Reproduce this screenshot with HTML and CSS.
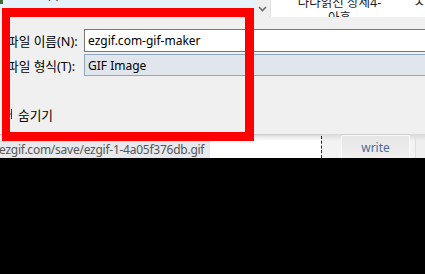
FILE: index.html
```html
<!DOCTYPE html>
<html lang="ko">
<head>
<meta charset="utf-8">
<link rel="stylesheet" href="styles.css">
</head>
<body>
<div class="screen">
  <div class="topbar">
    <div class="nav"><span class="navicon"></span><span class="navtext">(?)</span></div>
    <div class="drop">
      <svg width="9" height="6" viewBox="0 0 9 6"><path d="M1 1 L4.5 4.5 L8 1" fill="none" stroke="#6d6d6d" stroke-width="1.6"/></svg>
    </div>
    <div class="tabs">
      <div class="tab">나나읽선 상세4-<br>아홋</div>
      <div class="tab2">ㅅ</div>
    </div>
  </div>
  <div class="dialog">
    <div class="form">
      <div class="lbl">파일 이름(N):</div>
      <div class="field name">ezgif.com-gif-maker</div>
      <div class="lbl">파일 형식(T):</div>
      <div class="field type">GIF Image</div>
    </div>
    <div class="hide">
      <svg class="arrow" width="6" height="12" viewBox="0 0 6 12"><path d="M2.5 1 V11 M0 6 H2.5" fill="none" stroke="#333" stroke-width="1"/></svg>
      <span>숨기기</span>
    </div>
  </div>
  <div class="page">
    <div class="left">
      <div class="status">ezgif.com/save/ezgif-1-4a05f376db.gif</div>
    </div>
    <div class="dash"></div>
    <div class="gap"></div>
    <div class="btn">write</div>
    <div class="gap2"></div>
    <div class="rest"></div>
  </div>
  <div class="highlight"></div>
</div>
</body>
</html>
```
FILE: styles.css
```css
html, body {
  margin: 0;
  padding: 0;
  background: #000;
  overflow: hidden;
}
body {
  width: 425px;
  height: 274px;
  font-family: "Noto Sans", "Noto Sans CJK KR", sans-serif;
  font-size: 12px;
  color: #000;
}
.screen {
  position: relative;
  width: 425px;
  height: 158px;
  overflow: hidden;
}
.topbar {
  display: flex;
  height: 17px;
  overflow: hidden;
  background: #fff;
}
.nav {
  width: 258px;
  background: #e5f1fb;
  display: flex;
  align-items: flex-start;
  overflow: hidden;
}
.navicon {
  width: 3px;
  height: 4px;
  background: #3f6b3a;
}
.navtext {
  margin-left: 44px;
  margin-top: -12px;
  line-height: 14px;
  color: #333;
}
.drop {
  width: 17px;
  background: #efefef;
  border-right: 1px solid #e2e2e2;
  display: flex;
  justify-content: center;
  padding-top: 6px;
  box-sizing: border-box;
}
.tabs {
  flex: 1;
  display: flex;
}
.tab {
  width: 136px;
  text-align: center;
  font-size: 12.5px;
  line-height: 15px;
  margin-top: -5px;
  color: #1c1c2a;
}
.tab2 {
  margin-left: 6px;
  font-size: 12.5px;
  line-height: 15px;
  margin-top: -5px;
  color: #1c1c2a;
}
.dialog {
  height: 117px;
  background: #f0f0f0;
  padding-top: 12px;
  box-sizing: border-box;
}
.form {
  display: grid;
  grid-template-columns: 84px 1fr;
  row-gap: 2px;
  margin-right: -4px;
}
.lbl {
  padding-left: 7px;
  display: flex;
  align-items: center;
  height: 23px;
  white-space: nowrap;
  font-size: 12.7px;
}
.field {
  height: 23px;
  box-sizing: border-box;
  padding-left: 3px;
  display: flex;
  align-items: center;
}
.name {
  background: #fff;
  border: 1px solid #777;
}
.type {
  background: #e1e6ec;
  border: 1px solid #8ea7bf;
  height: 22px;
}
.hide {
  margin-top: 29px;
  display: flex;
  align-items: center;
  height: 16px;
  padding-left: 9px;
  font-size: 12.7px;
}
.arrow {
  margin-right: 3px;
}
.page {
  height: 24px;
  display: flex;
  background: linear-gradient(#c8c8c8 0, #e6e6e6 2px, #fff 7px);
}
.left {
  width: 321px;
  display: flex;
  flex-direction: column;
  justify-content: flex-end;
}
.status {
  width: 210px;
  height: 17px;
  background: #e7e9ec;
  border-top: 1px solid #dcdcdc;
  box-sizing: border-box;
  color: #555;
  line-height: 15px;
  letter-spacing: -0.25px;
  white-space: nowrap;
  overflow: hidden;
  text-indent: -1px;
}
.dash {
  width: 0;
  margin-top: 2px;
  border-left: 1px dashed #222;
}
.gap {
  width: 19px;
  background: linear-gradient(#d8d8d8 0, #f3f3f3 7px);
}
.btn {
  width: 69px;
  margin-top: 1px;
  box-sizing: border-box;
  border: 1px solid #f9f9f9;
  border-bottom: 0;
  border-radius: 2px 2px 0 0;
  background: linear-gradient(#e6e6e6, #efefef);
  color: #4a6e9e;
  text-align: center;
  line-height: 23px;
}
.gap2 {
  width: 5px;
  background: linear-gradient(#d8d8d8 0, #f3f3f3 7px);
  border-right: 1px solid #dedede;
}
.rest {
  flex: 1;
  background: linear-gradient(#d8d8d8 0, #efefef 7px);
}
.highlight {
  position: absolute;
  left: 2px;
  top: 8px;
  width: 252px;
  height: 133px;
  box-sizing: border-box;
  border: 9px solid #ff0000;
  border-left-width: 8px;
}
```
